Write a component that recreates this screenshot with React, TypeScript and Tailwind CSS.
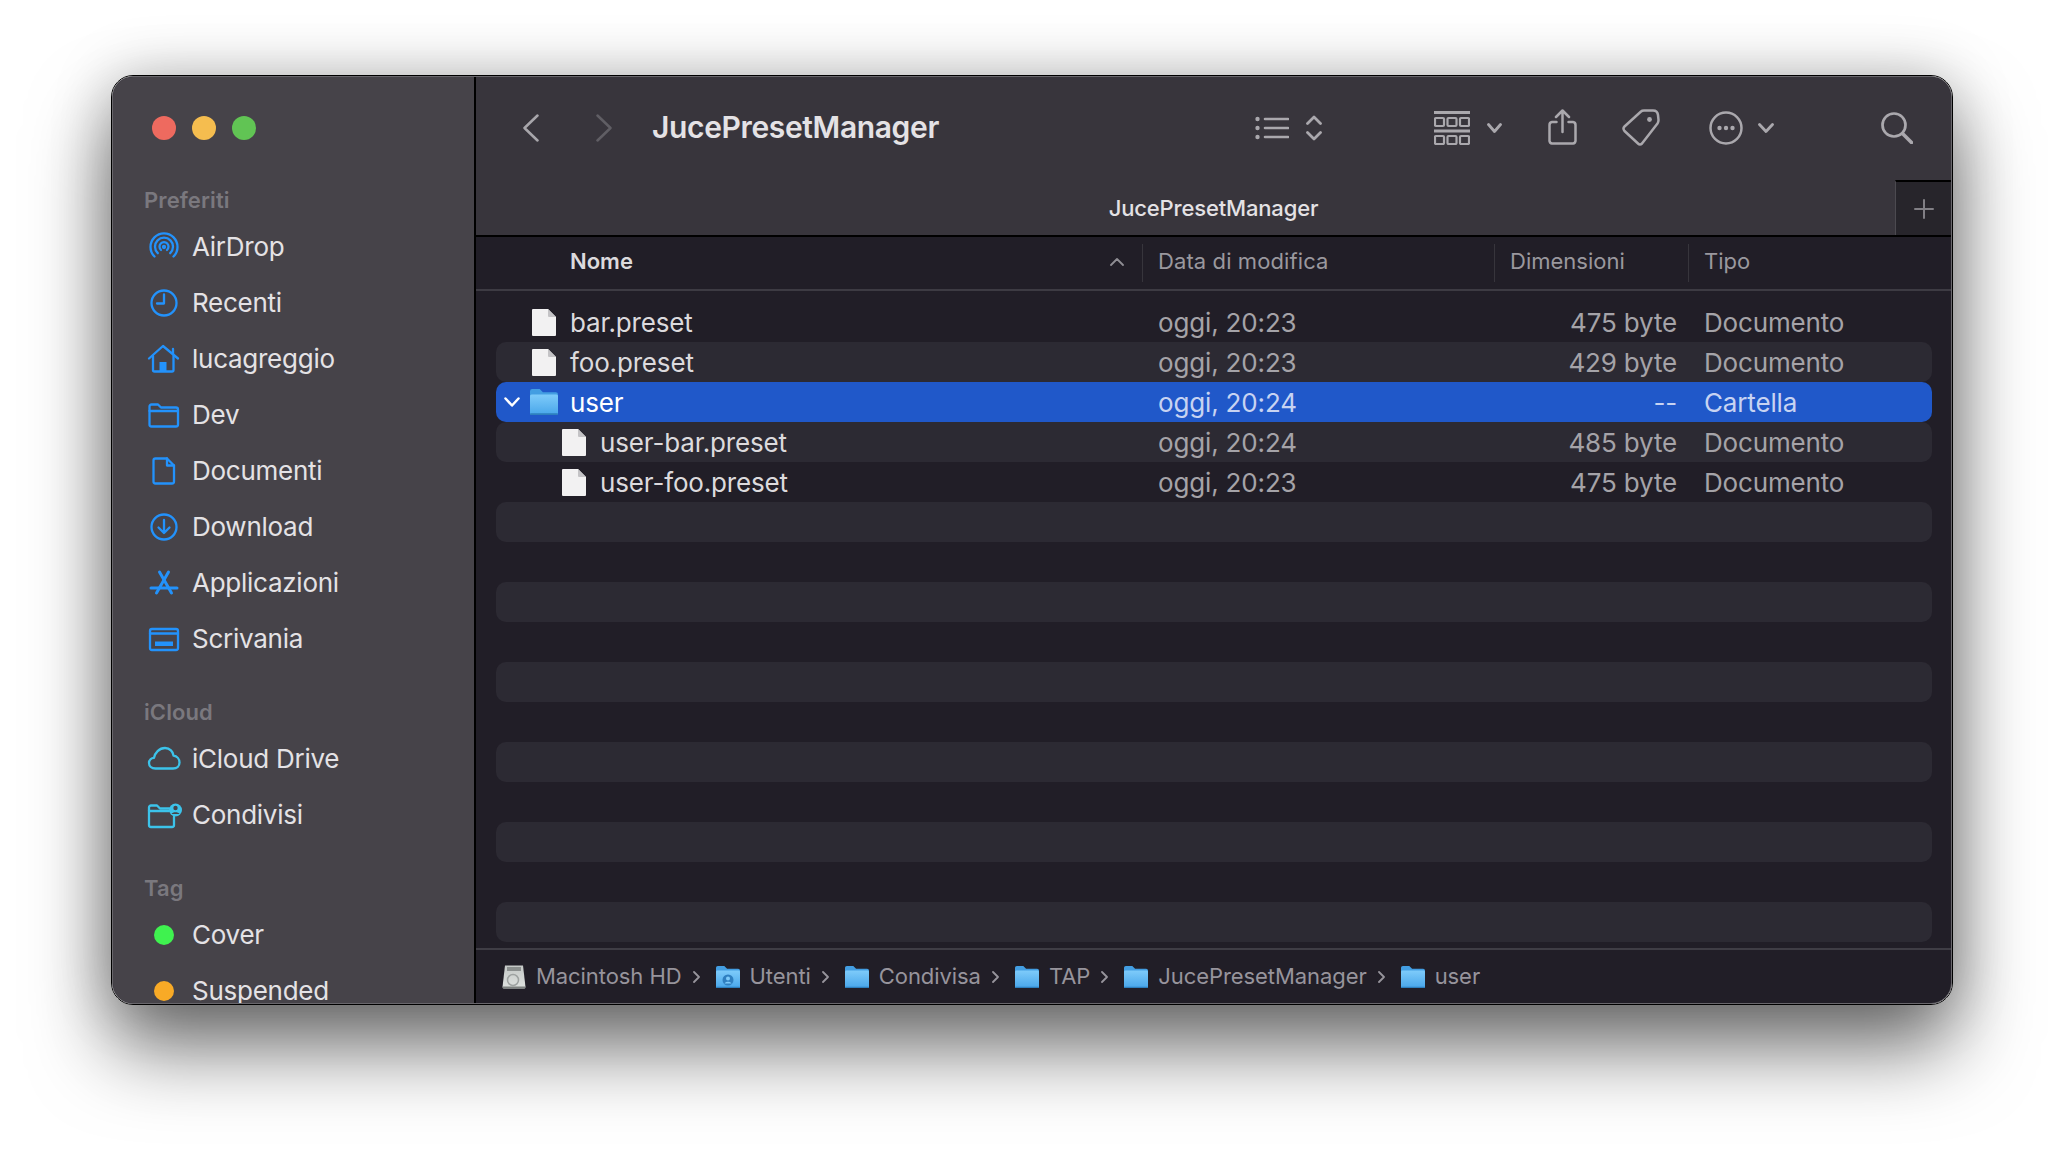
import type { ReactNode } from "react";

const BLUE = "#2392fb";
const CYAN = "#3cc3ea";

function Ico({ children, color = BLUE }: { children: ReactNode; color?: string }) {
  return (
    <svg width="36" height="36" viewBox="0 0 36 36" fill="none" stroke={color} strokeWidth="2.300" strokeLinecap="round" strokeLinejoin="round" className="shrink-0">
      {children}
    </svg>
  );
}

const AirDropIcon = () => (
  <Ico>
    <path d="M8.500 27.500A13.500 13.500 0 1 1 27.500 27.500" />
    <path d="M11.800 24.200A9 9 0 1 1 24.200 24.200" />
    <path d="M15 21A4.500 4.500 0 1 1 21 21" />
    <circle cx="18" cy="18" r="1" />
  </Ico>
);
const ClockIcon = () => (
  <Ico>
    <circle cx="18" cy="18" r="12.500" />
    <path d="M18 9.500V18.500H11" />
  </Ico>
);
const HomeIcon = () => (
  <Ico>
    <path d="M3 17.500L17 5L32 17.500" />
    <path d="M27 8V13" />
    <path d="M7 15V29A1.500 1.500 0 0 0 8.500 30.500H26A1.500 1.500 0 0 0 27.500 29V15" />
    <rect x="13.500" y="21" width="7" height="9" fill={BLUE} stroke="none" />
  </Ico>
);
const FolderOutline = () => (
  <Ico>
    <path d="M3.500 12V9.500A2 2 0 0 1 5.500 7.500H12L15 10.500H30A2 2 0 0 1 32 12.500V27.500A2 2 0 0 1 30 29.500H5.500A2 2 0 0 1 3.500 27.500Z" />
    <path d="M3.500 14H32" />
  </Ico>
);
const DocIcon = () => (
  <Ico>
    <path d="M9.500 5.500H21L28 12.500V28.500A2 2 0 0 1 26 30.500H9.500A2 2 0 0 1 7.500 28.500V7.500A2 2 0 0 1 9.500 5.500Z" />
    <path d="M21 5.500V12.500H28" />
  </Ico>
);
const DownloadIcon = () => (
  <Ico>
    <circle cx="18" cy="18" r="12.500" />
    <path d="M18 11V24M12.500 18.500L18 24L23.500 18.500" />
  </Ico>
);
const AppsIcon = () => (
  <Ico>
    <g strokeWidth="3">
      <path d="M13.500 7L25.500 28" />
      <path d="M22.500 7L10.500 28" />
      <path d="M5 23H31" />
    </g>
  </Ico>
);
const DesktopIcon = () => (
  <Ico>
    <rect x="4" y="8" width="28" height="21" rx="2" />
    <path d="M4 12.500H32" />
    <rect x="9" y="20.500" width="18" height="4.500" fill={BLUE} stroke="none" />
  </Ico>
);
const CloudIcon = () => (
  <Ico color={CYAN}>
    <path d="M9.500 27.500C5.500 27.500 3 25 3 22C3 19 5.500 17 8 16.800C9 12 13 7 19 7C24 7 27 11 27.500 14.500C31 15 33.500 18 33.500 21.500C33.500 25 31 27.500 27 27.500Z" />
  </Ico>
);
const SharedIcon = () => (
  <Ico color={CYAN}>
    <path d="M23 11.500H14L11 8.500H5A2 2 0 0 0 3 10.500V28A2 2 0 0 0 5 30H26A2 2 0 0 0 28 28V20" />
    <path d="M3 14H23" />
    <circle cx="29.500" cy="13" r="6.500" fill={CYAN} stroke="none" />
    <circle cx="29.500" cy="11" r="2.200" fill="#464349" stroke="none" />
    <path d="M25.500 17C26.500 14.500 32.500 14.500 33.500 17Z" fill="#464349" stroke="none" />
  </Ico>
);

const TagDot = ({ color }: { color: string }) => (
  <span className="flex h-9 w-9 shrink-0 items-center justify-center">
    <span className="h-5 w-5 rounded-full" style={{ background: color }} />
  </span>
);

const sections = [
  {
    title: "Preferiti",
    items: [
      { label: "AirDrop", icon: <AirDropIcon /> },
      { label: "Recenti", icon: <ClockIcon /> },
      { label: "lucagreggio", icon: <HomeIcon /> },
      { label: "Dev", icon: <FolderOutline /> },
      { label: "Documenti", icon: <DocIcon /> },
      { label: "Download", icon: <DownloadIcon /> },
      { label: "Applicazioni", icon: <AppsIcon /> },
      { label: "Scrivania", icon: <DesktopIcon /> },
    ],
  },
  {
    title: "iCloud",
    items: [
      { label: "iCloud Drive", icon: <CloudIcon /> },
      { label: "Condivisi", icon: <SharedIcon /> },
    ],
  },
  {
    title: "Tag",
    items: [
      { label: "Cover", icon: <TagDot color="#3ff24f" /> },
      { label: "Suspended", icon: <TagDot color="#f8aa26" /> },
    ],
  },
];

function Sidebar() {
  return (
    <aside className="flex h-full w-[363px] shrink-0 flex-col overflow-hidden border-r-2 border-black bg-[#464349]">
      <div className="mt-[39px] flex h-6 shrink-0 gap-4 pl-[39px]">
        <span className="h-6 w-6 rounded-full bg-[#ee6a5f]" />
        <span className="h-6 w-6 rounded-full bg-[#f5bd4f]" />
        <span className="h-6 w-6 rounded-full bg-[#61c454]" />
      </div>
      <div className="mt-[45px] flex flex-col gap-[30px]">
        {sections.map((s) => (
          <div key={s.title}>
            <p className="mb-1 flex h-[30px] items-center pl-[31px] text-[22px] font-semibold tracking-[0.1px] text-[#7a787e]">{s.title}</p>
            {s.items.map((it) => (
              <div key={it.label} className="flex h-14 items-center gap-[10px] pl-[33px] text-[26px] tracking-[-0.26px] text-[#e4e2e5]">
                {it.icon}
                <span className="-mt-[2px]">{it.label}</span>
              </div>
            ))}
          </div>
        ))}
      </div>
    </aside>
  );
}

const GREY = "#aaa8ad";

function Toolbar() {
  return (
    <div className="flex h-[103px] items-center pb-[2px] pl-[47px] pr-[38px]">
      <svg width="16" height="28" viewBox="0 0 16 28" fill="none" stroke="#a8a6ab" strokeWidth="2.500" strokeLinecap="round" strokeLinejoin="round" className="shrink-0">
        <path d="M14.500 1.500L1.500 14L14.500 26.500" />
      </svg>
      <svg width="16" height="28" viewBox="0 0 16 28" fill="none" stroke="#605e64" strokeWidth="2.500" strokeLinecap="round" strokeLinejoin="round" className="ml-[57px] shrink-0">
        <path d="M1.500 1.500L14.500 14L1.500 26.500" />
      </svg>
      <h1 className="ml-10 flex-1 text-[30px] font-semibold tracking-[-0.36px] text-[#e4e2e5]">JucePresetManager</h1>

      <svg width="34" height="24" viewBox="0 0 34 24" fill="none" stroke={GREY} strokeWidth="2.600" strokeLinecap="round" className="shrink-0">
        <path d="M10 3H33M10 12H33M10 21H33" />
        <g fill={GREY} stroke="none">
          <circle cx="2.500" cy="3" r="2.200" />
          <circle cx="2.500" cy="12" r="2.200" />
          <circle cx="2.500" cy="21" r="2.200" />
        </g>
      </svg>
      <svg width="16" height="26" viewBox="0 0 16 26" fill="none" stroke={GREY} strokeWidth="2.800" strokeLinecap="round" strokeLinejoin="round" className="ml-[17px] shrink-0">
        <path d="M1.500 8.500L8 2L14.500 8.500M1.500 17.500L8 24L14.500 17.500" />
      </svg>

      <svg width="36" height="34" viewBox="0 0 36 34" fill="none" stroke={GREY} strokeWidth="2.200" className="ml-[112px] shrink-0">
        <path d="M0 1.500H36M0 20H36" strokeWidth="3" />
        <rect x="1" y="7" width="9" height="8" rx="1" />
        <rect x="13.500" y="7" width="9" height="8" rx="1" />
        <rect x="26" y="7" width="9" height="8" rx="1" />
        <rect x="1" y="25" width="9" height="8" rx="1" />
        <rect x="13.500" y="25" width="9" height="8" rx="1" />
        <rect x="26" y="25" width="9" height="8" rx="1" />
      </svg>
      <svg width="15" height="10" viewBox="0 0 15 10" fill="none" stroke={GREY} strokeWidth="2.800" strokeLinecap="round" strokeLinejoin="round" className="ml-[17px] shrink-0">
        <path d="M1.500 1.500L7.500 8.500L13.500 1.500" />
      </svg>

      <svg width="29" height="36" viewBox="0 0 29 36" fill="none" stroke={GREY} strokeWidth="2.500" strokeLinecap="round" strokeLinejoin="round" className="-mt-[2px] ml-[46px] shrink-0">
        <path d="M8.500 13H4A3 3 0 0 0 1.500 16V32A3 3 0 0 0 4 34.500H25A3 3 0 0 0 27.500 32V16A3 3 0 0 0 25 13H20.500" />
        <path d="M14.500 23V1.500M8 8L14.500 1.500L21 8" />
      </svg>

      <svg width="38" height="37" viewBox="0 0 38 37" fill="none" stroke={GREY} strokeWidth="2.500" strokeLinejoin="round" className="ml-[45px] shrink-0">
        <path d="M2.500 17.500L19 2.500Q20 1.500 22 1.500H31Q35.500 1.500 36 6L36.500 11Q36.500 13 35.500 14.500L20 34.500Q18 36.500 16 34.500L2.500 22Q0.500 19.500 2.500 17.500Z" />
        <circle cx="27.500" cy="10.500" r="2.400" fill={GREY} stroke="none" />
      </svg>

      <svg width="34" height="34" viewBox="0 0 34 34" fill="none" stroke={GREY} strokeWidth="2.500" className="ml-[49px] shrink-0">
        <circle cx="17" cy="17" r="15.500" />
        <g fill={GREY} stroke="none">
          <circle cx="10.500" cy="17" r="2.200" />
          <circle cx="17" cy="17" r="2.200" />
          <circle cx="23.500" cy="17" r="2.200" />
        </g>
      </svg>
      <svg width="16" height="10" viewBox="0 0 16 10" fill="none" stroke={GREY} strokeWidth="2.800" strokeLinecap="round" strokeLinejoin="round" className="ml-[15px] shrink-0">
        <path d="M1.500 1.500L8 8.500L14.500 1.500" />
      </svg>

      <svg width="32" height="32" viewBox="0 0 32 32" fill="none" stroke={GREY} strokeWidth="2.700" strokeLinecap="round" className="ml-[107px] shrink-0">
        <circle cx="13" cy="13" r="11.500" />
        <path d="M21.500 21.500L30.500 30.500" strokeWidth="3.500" />
      </svg>
    </div>
  );
}

function TabRow() {
  return (
    <div className="flex h-[57px] border-b-2 border-black">
      <div className="flex flex-1 items-center justify-center pl-14 pt-[1px] text-[22px] font-medium tracking-[-0.16px] text-[#e4e2e5]">JucePresetManager</div>
      <div className="flex w-14 items-center justify-center border-l border-t-2 border-l-[#4c4a50] border-t-black bg-[#27252b]">
        <svg width="20" height="20" viewBox="0 0 20 20" stroke="#817f85" strokeWidth="2" strokeLinecap="round">
          <path d="M10 1V19M1 10H19" />
        </svg>
      </div>
    </div>
  );
}

function Header() {
  return (
    <div className="flex h-[54px] items-center border-b-2 border-[#3d3b43] pb-[1px] text-[22px] text-[#9a989e]">
      <div className="flex h-[38px] w-[667px] items-center justify-between border-r border-[#37353c] pb-[2px] pl-[94px] pr-[18px]">
        <span className="font-semibold text-[#dcdadd]">Nome</span>
        <svg width="14" height="8" viewBox="0 0 14 8" fill="none" stroke="#8f8d93" strokeWidth="1.800" strokeLinecap="round" strokeLinejoin="round">
          <path d="M1 7L7 1L13 7" />
        </svg>
      </div>
      <div className="flex h-[38px] w-[352px] items-center border-r border-[#37353c] pb-[2px] pl-[15px] tracking-[0.1px]">Data di modifica</div>
      <div className="flex h-[38px] w-[194px] items-center border-r border-[#37353c] pb-[2px] pl-[15px]">Dimensioni</div>
      <div className="pb-[2px] pl-[15px]">Tipo</div>
    </div>
  );
}

function FolderIcon({ size = 28 }: { size?: number }) {
  return (
    <svg width={size} height={size} viewBox="1 1 26 26" className="shrink-0">
      <defs>
        <linearGradient id="folderFront" x1="0" y1="0" x2="0" y2="1">
          <stop offset="0" stopColor="#7ecbfa" />
          <stop offset="1" stopColor="#48a6ea" />
        </linearGradient>
      </defs>
      <path d="M1 4A2 2 0 0 1 3 2H10L13 5H25A2 2 0 0 1 27 7V14H1Z" fill="#439ee2" />
      <rect x="1" y="7" width="26" height="19" rx="1.500" fill="url(#folderFront)" />
      <rect x="1" y="24.500" width="26" height="1.500" rx="0.700" fill="#2d7fbe" />
    </svg>
  );
}

function FileIcon() {
  return (
    <svg width="28" height="28" viewBox="0 0 28 28" className="shrink-0">
      <path d="M3 1H18L26 9V27A1 1 0 0 1 25 28H3A1 1 0 0 1 2 27V2A1 1 0 0 1 3 1Z" fill="#f2f1f2" />
      <path d="M18 1V8A1 1 0 0 0 19 9H26Z" fill="#c4c3c6" />
    </svg>
  );
}

const rows = [
  { name: "bar.preset", date: "oggi, 20:23", size: "475 byte", kind: "Documento" },
  { name: "foo.preset", date: "oggi, 20:23", size: "429 byte", kind: "Documento", stripe: true },
  { name: "user", date: "oggi, 20:24", size: "--", kind: "Cartella", selected: true },
  { name: "user-bar.preset", date: "oggi, 20:24", size: "485 byte", kind: "Documento", stripe: true, child: true },
  { name: "user-foo.preset", date: "oggi, 20:23", size: "475 byte", kind: "Documento", child: true },
];

// empty striped rows after the files, alternating like the list
const emptyRows = [true, false, true, false, true, false, true, false, true, false, true];

function FileList() {
  return (
    <div className="ml-5 mr-[19px] mt-[11px] flex flex-1 flex-col">
      {rows.map((r) => (
        <div
          key={r.name}
          className={
            "grid h-10 shrink-0 grid-cols-[662px_280px_239px_1fr] items-center rounded-[10px] text-[26px] tracking-[-0.16px] " +
            (r.selected ? "bg-[#2058c9] text-[#c7d3f2]" : r.stripe ? "bg-[#2c2a33] text-[#a5a3a8]" : "text-[#a5a3a8]")
          }
        >
          <div className={"flex items-center gap-3 " + (r.child ? "pl-16" : r.selected ? "" : "pl-[34px]")}>
            {r.selected && (
              <span className="flex w-[32px] shrink-0 justify-center">
                <svg width="16" height="10" viewBox="0 0 16 10" fill="none" stroke="#ffffff" strokeWidth="2.500" strokeLinecap="round" strokeLinejoin="round">
                  <path d="M1.500 1.500L8 8.500L14.500 1.500" />
                </svg>
              </span>
            )}
            <span className={r.selected ? "-ml-[10px] flex" : "flex"}>{r.selected ? <FolderIcon /> : <FileIcon />}</span>
            <span className={r.selected ? "text-[#ffffff]" : "text-[#dcdadd]"}>{r.name}</span>
          </div>
          <div>{r.date}</div>
          <div className="text-right">{r.size}</div>
          <div className="pl-[27px]">{r.kind}</div>
        </div>
      ))}
      {emptyRows.map((stripe, i) => (
        <div key={i} className={"h-10 shrink-0 rounded-[10px] " + (stripe ? "bg-[#2c2a33]" : "")} />
      ))}
    </div>
  );
}

const Chevron = () => (
  <svg width="7" height="12" viewBox="0 0 7 12" fill="none" stroke="#97949c" strokeWidth="1.800" strokeLinecap="round" strokeLinejoin="round" className="mx-[11px] shrink-0">
    <path d="M1 1L6 6L1 11" />
  </svg>
);

function DiskIcon() {
  return (
    <svg width="24" height="24" viewBox="0 0 24 24" className="shrink-0">
      <defs>
        <linearGradient id="diskBody" x1="0" y1="0" x2="0" y2="1">
          <stop offset="0" stopColor="#c4c8c6" />
          <stop offset="1" stopColor="#dfe2e0" />
        </linearGradient>
      </defs>
      <path d="M3 0.500H21L23.500 22A1.500 1.500 0 0 1 22 23.500H2A1.500 1.500 0 0 1 0.500 22Z" fill="url(#diskBody)" />
      <rect x="5" y="2" width="14" height="4" fill="#8b8f8e" />
      <circle cx="11" cy="15" r="5.500" fill="none" stroke="#9ea2a1" strokeWidth="1.500" />
      <rect x="1" y="21.500" width="22" height="2" fill="#7c807f" />
    </svg>
  );
}

function UsersFolder() {
  return (
    <span className="relative flex shrink-0">
      <FolderIcon size={24} />
      <svg width="24" height="24" viewBox="0 0 24 24" className="absolute left-0 top-0">
        <circle cx="12" cy="15" r="5.500" fill="#2f7fc0" />
        <circle cx="12" cy="13.500" r="2" fill="#7ecbfa" />
        <path d="M8.500 18.500C9.500 16 14.500 16 15.500 18.500Z" fill="#7ecbfa" />
      </svg>
    </span>
  );
}

const crumbs = [
  { label: "Macintosh HD", icon: <DiskIcon /> },
  { label: "Utenti", icon: <UsersFolder /> },
  { label: "Condivisa", icon: <FolderIcon size={24} /> },
  { label: "TAP", icon: <FolderIcon size={24} /> },
  { label: "JucePresetManager", icon: <FolderIcon size={24} /> },
  { label: "user", icon: <FolderIcon size={24} /> },
];

function PathBar() {
  return (
    <div className="flex h-[55px] shrink-0 items-center border-t-2 border-[#3f3d45] pl-[26px] text-[22px] tracking-[-0.07px] text-[#97949c]">
      {crumbs.map((c, i) => (
        <div key={c.label} className="flex items-center">
          {i > 0 && <Chevron />}
          <span className={i > 0 ? "ml-[5px] flex items-center gap-[10px]" : "flex items-center gap-[10px]"}>
            {c.icon}
            {c.label}
          </span>
        </div>
      ))}
    </div>
  );
}

export default function App() {
  return (
    <div className="min-h-screen bg-white pl-[111px] pt-[75px] font-['Inter',sans-serif]">
      <div className="h-[930px] w-[1842px] rounded-[22px] border border-black shadow-[0_44px_80px_rgba(0,0,0,0.55),0_0_60px_rgba(0,0,0,0.22)]">
        <div className="flex h-full overflow-hidden rounded-[21px] border border-[#69676c] bg-[#211e27]">
          <Sidebar />
          <main className="flex min-w-0 flex-1 flex-col">
            <div className="bg-[#38353c]">
              <Toolbar />
              <TabRow />
            </div>
            <Header />
            <div className="flex min-h-0 flex-1 flex-col overflow-hidden">
              <FileList />
            </div>
            <PathBar />
          </main>
        </div>
      </div>
    </div>
  );
}
